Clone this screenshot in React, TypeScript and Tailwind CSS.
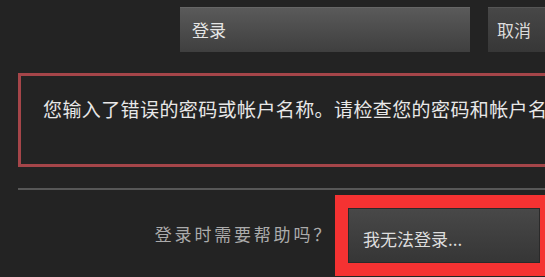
import React from 'react';

const FONT = "font-['Noto_Sans_CJK_SC','Noto_Sans_CJK_JP',sans-serif]";

export default function App() {
  return (
    <div className={`w-[545px] h-[277px] overflow-hidden bg-[#232323] ${FONT}`}>
      <div className="w-[640px]">
        {/* Top buttons */}
        <div className="flex pl-[180px] pt-[7px] gap-[18px]">
          <button className="w-[290px] h-[45px] flex items-center pl-[12px] text-[17px] text-[#e6e6e6] bg-gradient-to-b from-[#5a5a5a] to-[#3f3f3f] border-t border-[#666]">
            登录
          </button>
          <button className="w-[80px] h-[45px] flex items-center pl-[9px] text-[17px] text-[#dcdcdc] bg-gradient-to-b from-[#474747] to-[#373737] border-t border-[#555]">
            取消
          </button>
        </div>

        {/* Error message */}
        <div className="ml-[18px] mt-[21px] h-[94px] border-[3px] border-[#a54549] pl-[22px] pt-[21px]">
          <p className="text-[19px] leading-[24px] tracking-[0.4px] text-[#e8e8e8] whitespace-nowrap">
            您输入了错误的密码或帐户名称。请检查您的密码和帐户名称并重试。
          </p>
        </div>

        {/* Divider */}
        <div className="ml-[18px] mt-[21px] h-[2px] bg-[#575757]" />

        {/* Help row */}
        <div className="flex items-start mt-[5px]">
          <div className="w-[335px] h-[82px] flex items-center justify-end pr-[2px] pb-[4px]">
            <span className="text-[17px] tracking-[2.8px] text-[#ababab]">登录时需要帮助吗？</span>
          </div>
          <div className="border-[13px] border-[#f53232]">
            <button className="w-[192px] h-[55px] flex items-center pl-[14px] pt-[7px] text-[17px] text-[#dedede] bg-gradient-to-b from-[#484848] to-[#363636] border border-[#2a2a2a]">
              我无法登录...
            </button>
          </div>
        </div>
      </div>
    </div>
  );
}
